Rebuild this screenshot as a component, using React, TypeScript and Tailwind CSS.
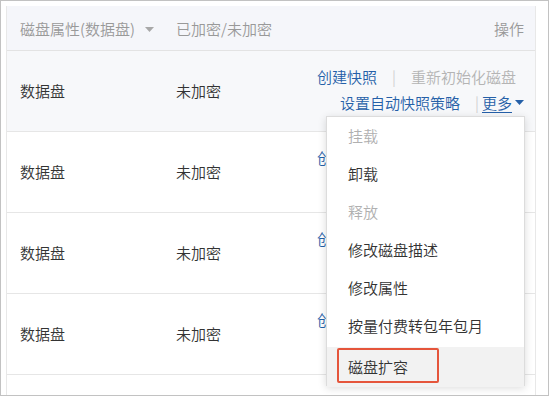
import type React from "react";

const font = { fontFamily: '"Microsoft YaHei", "Noto Sans CJK SC", "Noto Sans", sans-serif' };

const menuItems: { label: string; disabled?: boolean; active?: boolean }[] = [
  { label: "挂载", disabled: true },
  { label: "卸载" },
  { label: "释放", disabled: true },
  { label: "修改磁盘描述" },
  { label: "修改属性" },
  { label: "按量付费转包年包月" },
  { label: "磁盘扩容", active: true },
];

const Caret: React.FC<{ className?: string }> = ({ className }) => (
  <svg className={className} width="9" height="5" viewBox="0 0 9 5">
    <path d="M0 0h9L4.5 5z" fill="currentColor" />
  </svg>
);

const DiskRow: React.FC<{ hovered?: boolean }> = ({ hovered }) => (
  <div
    className={`flex items-center h-[81px] border-b border-[#e6e6e6] text-[15px] text-[#333] ${
      hovered ? "bg-[#f7f8fa]" : "bg-white"
    }`}
  >
    <div className="w-[169px] pl-[13px]">数据盘</div>
    <div className="flex-1">未加密</div>
    <div className="flex flex-col items-end pr-[11px] leading-[26px] pb-[3px]">
      <div className="flex items-center pr-[8px]">
        <span className="text-[#2560a8]">创建快照</span>
        <span className="text-[#d0d0d0] ml-[15px] mr-[15px]">|</span>
        <span className="text-[#b4b4b4]">重新初始化磁盘</span>
      </div>
      <div className="flex items-center">
        <span className="text-[#2560a8]">设置自动快照策略</span>
        <span className="text-[#d0d0d0] ml-[15px] mr-[3px]">|</span>
        <span className="text-[#2560a8] underline underline-offset-[3px]">更多</span>
        <Caret className="text-[#2560a8] ml-[3px]" />
      </div>
    </div>
  </div>
);

export default function App() {
  return (
    <div
      className="relative w-[549px] h-[396px] overflow-hidden bg-white border border-[#c2c2c2] pt-[5px] pl-[5px] pr-[12px] font-[350]"
      style={font}
    >
      <div className="border-l border-r border-[#e8e8e8] h-full">
        <div className="flex items-center h-[45px] bg-[#f5f6fa] border-b border-[#e3e3e3] text-[15px] text-[#999] pt-[2px]">
          <div className="w-[169px] pl-[13px] flex items-center">
            磁盘属性(数据盘)
            <Caret className="text-[#a8a8a8] ml-[10px]" />
          </div>
          <div className="flex-1">已加密/未加密</div>
          <div className="pr-[11px]">操作</div>
        </div>
        <DiskRow hovered />
        <DiskRow />
        <DiskRow />
        <DiskRow />
        <div className="h-[81px] bg-white" />
      </div>

      <div className="absolute left-[325px] top-[115px] w-[199px] h-[270px] bg-white border border-[#dcdcdc] shadow-[0_2px_8px_rgba(0,0,0,0.15)] text-[15px]">
        {menuItems.map((item, i) => (
          <div
            key={item.label}
            className={`relative flex items-center pl-[21px] ${i === 6 ? "h-[40px] mt-[2px]" : "h-[38px]"} ${
              item.disabled ? "text-[#b0b0b0]" : "text-[#333]"
            } ${item.active ? "bg-[#f2f2f2]" : ""}`}
          >
            {item.label}
            {item.active && (
              <div className="absolute left-[10px] top-[1px] w-[102px] h-[35px] border-2 border-[#e5553b] rounded-[2px]" />
            )}
          </div>
        ))}
      </div>
    </div>
  );
}
